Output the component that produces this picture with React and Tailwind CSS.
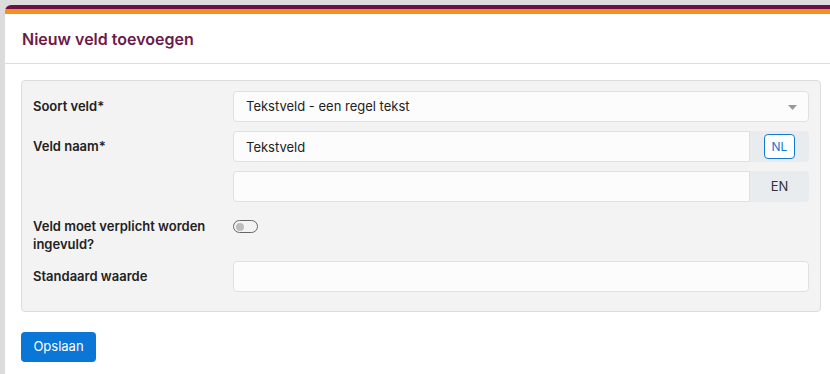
import { useState } from 'react';

function Label({ children }) {
    return (
        <div className="w-[200px] shrink-0 pt-[6px] text-[13px] leading-[18px] font-semibold text-[#222]">
            {children}
        </div>
    );
}

function LangInput({ value, lang, active }) {
    return (
        <div className="flex flex-1 h-[31px]">
            <input
                defaultValue={value}
                className="flex-1 min-w-0 h-full px-[12px] bg-[#fcfcfc] border border-[#e0e0e0] rounded-l-[4px] text-[13px] text-[#222] outline-none"
            />
            <div className="w-[59px] h-full flex items-center justify-center bg-[#e9ecef] rounded-r-[4px]">
                {active ? (
                    <span className="w-[31px] h-[25px] flex items-center justify-center border border-[#1479d4] rounded-[4px] text-[12px] text-[#1479d4] bg-white">
                        {lang}
                    </span>
                ) : (
                    <span className="text-[13px] text-[#333]">{lang}</span>
                )}
            </div>
        </div>
    );
}

export default function App() {
    const [required, setRequired] = useState(false);

    return (
        <div className="w-full h-[374px] overflow-hidden bg-[#dcdcdc] pl-[5px] pt-[5px]" style={{ fontFamily: 'Inter, "Noto Sans", sans-serif' }}>
            <div className="w-[832px] min-h-[369px] bg-white rounded-tl-[6px] overflow-hidden">
                <div className="h-[4px] bg-[#6b1046]" />
                <div className="h-[5px] bg-[#f78f1e]" />

                <div className="h-[50px] px-[17px] flex items-center border-b border-[#dedede]">
                    <h1 className="text-[16px] font-semibold text-[#6b1a4b]">Nieuw veld toevoegen</h1>
                </div>

                <div className="px-[16px] pt-[16px]">
                    <div className="bg-[#f3f3f3] border border-[#dcdcdc] rounded-[4px] pl-[11px] pr-[11px] pt-[10px] pb-[19px] flex flex-col gap-[9px]">
                        <div className="flex">
                            <Label>Soort veld*</Label>
                            <div className="relative flex-1 h-[31px] bg-[#fcfcfc] border border-[#e0e0e0] rounded-[4px] flex items-center px-[12px] text-[13px] text-[#222]">
                                <span>Tekstveld - een regel tekst</span>
                                <svg className="absolute right-[11px] top-[13px]" width="9" height="5" viewBox="0 0 9 5">
                                    <path d="M0 0h9L4.5 5z" fill="#999" />
                                </svg>
                            </div>
                        </div>

                        <div className="flex">
                            <Label>Veld naam*</Label>
                            <LangInput value="Tekstveld" lang="NL" active />
                        </div>

                        <div className="flex">
                            <div className="w-[200px] shrink-0" />
                            <LangInput value="" lang="EN" />
                        </div>

                        <div className="flex">
                            <Label>
                                Veld moet verplicht worden
                                <br />
                                ingevuld?
                            </Label>
                            <button
                                type="button"
                                onClick={() => setRequired(!required)}
                                className="mt-[9px] w-[25px] h-[13px] rounded-full border border-[#666] bg-[#f3f3f3] flex items-center px-[2px]"
                            >
                                <span className="w-[8px] h-[8px] rounded-full bg-[#bdbdbd]" />
                            </button>
                        </div>

                        <div className="flex -mt-[1px]">
                            <Label>Standaard waarde</Label>
                            <input className="flex-1 h-[31px] px-[12px] bg-[#fcfcfc] border border-[#e0e0e0] rounded-[4px] text-[13px] outline-none" />
                        </div>
                    </div>

                    <button className="mt-[20px] w-[75px] h-[30px] bg-[#0a76d8] text-white text-[13px] rounded-[4px]">
                        Opslaan
                    </button>
                </div>
            </div>
        </div>
    );
}
